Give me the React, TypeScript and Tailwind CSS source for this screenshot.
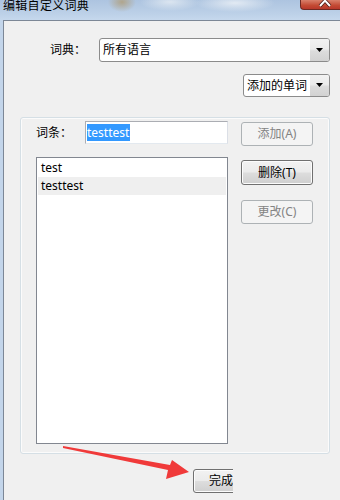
import React from "react";

const font = "font-['Noto_Sans','Noto_Sans_CJK_SC',sans-serif]";

function Arrow() {
  return (
    <svg width="8" height="5" viewBox="0 0 8 5">
      <path d="M0 0 L7 0 L3.5 4 Z" fill="#000" />
    </svg>
  );
}

function Combo({ text, width }: { text: string; width: string }) {
  return (
    <div className={`${width} flex rounded-[3px] border border-[#8b8b8b] bg-white overflow-hidden`}>
      <div className="flex-1 flex items-center pl-[3px] text-[12px] leading-[14px] text-black whitespace-nowrap overflow-hidden">{text}</div>
      <div className="w-[19px] flex items-center justify-center bg-[linear-gradient(#f2f2f2,#ebebeb_45%,#dcdcdc_55%,#d2d2d2)]">
        <Arrow />
      </div>
    </div>
  );
}

function Btn({ label, enabled, extra = "" }: { label: string; enabled?: boolean; extra?: string }) {
  return enabled ? (
    <div className={`h-[25px] w-[72px] flex items-center justify-center rounded-[3px] border border-[#707070] bg-[linear-gradient(#f2f2f2,#ebebeb_48%,#dddddd_52%,#cfcfcf)] text-[12px] text-black shadow-[inset_0_0_0_1px_#fcfcfc] ${extra}`}>
      {label}
    </div>
  ) : (
    <div className={`h-[24px] w-[72px] flex items-center justify-center rounded-[3px] border border-[#adb2b5] bg-[#f4f4f4] text-[12px] text-[#838383] ${extra}`}>
      {label}
    </div>
  );
}

export default function App() {
  return (
    <div className={`relative w-[340px] h-[500px] overflow-hidden bg-[#c3d5ea] ${font}`}>
      {/* title bar */}
      <div className="h-[20px] flex items-start justify-between bg-[radial-gradient(ellipse_14px_10px_at_122px_2px,#b0a58c,transparent),radial-gradient(ellipse_30px_9px_at_170px_2px,#dbe5f0,transparent),radial-gradient(ellipse_40px_9px_at_235px_3px,#e2eaf3,transparent),linear-gradient(#adc4e0,#bdd1e8_70%,#c6d8ed)]">
        <span className="pl-[3px] -mt-[1px] text-[12px] leading-[13px] tracking-[0.3px] text-black">编辑自定义词典</span>
        <div className="w-[40px] h-[10px] rounded-bl-[4px] border border-t-0 border-r-0 border-[#6f2a22] bg-[linear-gradient(#d9806b,#c34a33_60%,#b8382a)] flex justify-center overflow-hidden">
          <svg width="16" height="10" viewBox="0 0 16 10" className="ml-[10px]">
            <path d="M2 -5 L12 6 M12 -5 L2 6" stroke="#4a1a14" strokeWidth="3.5" />
            <path d="M2 -5 L12 6 M12 -5 L2 6" stroke="#fff" strokeWidth="2" />
          </svg>
        </div>
      </div>

      {/* window body */}
      <div className="ml-[3px] h-[480px] border-l border-t border-[#7c8796] bg-[#f0f0f0] flex flex-col">
        <div className="mt-[17px] flex items-center pl-[46px]">
          <div className="w-[49px] text-[12px] text-black">词典：</div>
          <div className="h-[24px] flex">
            <Combo text="所有语言" width="w-[231px]" />
          </div>
        </div>

        <div className="mt-[12px] flex justify-end pr-[10px]">
          <div className="h-[23px] flex">
            <Combo text="添加的单词" width="w-[87px]" />
          </div>
        </div>

        {/* group box */}
        <div className="mt-[20px] ml-[16px] w-[310px] h-[337px] rounded-[3px] border border-[#d5dfe5] shadow-[inset_0_0_0_1px_#fbfbfb] flex pl-[15px] pt-[3px]">
          <div className="w-[192px] flex flex-col">
            <div className="h-[23px] flex items-center">
              <div className="w-[49px] text-[12px] text-black">词条：</div>
              <div className="w-[143px] h-[23px] border border-[#abadb3] border-r-[#dbdfe6] border-b-[#e3e9ef] bg-white flex items-center pl-[1px]">
                <span className="bg-[#3399ff] text-white text-[12px] leading-[17px] pr-[1px]">testtest</span>
              </div>
            </div>
            <div className="mt-[13px] h-[287px] border border-[#828790] bg-white p-[1px] text-[12px] text-black">
              <div className="h-[18px] flex items-center pl-[3px]">test</div>
              <div className="h-[18px] flex items-center pl-[3px] bg-[#efefef]">testtest</div>
            </div>
          </div>
          <div className="ml-[13px] pt-[1px] flex flex-col">
            <Btn label="添加(A)" />
            <Btn label="删除(T)" enabled extra="mt-[14px]" />
            <Btn label="更改(C)" extra="mt-[15px]" />
          </div>
        </div>

        {/* bottom button, cut off */}
        <div className="mt-[15px] ml-[189px] w-[40px] h-[24px] overflow-hidden">
          <div className="w-[56px] h-[24px] flex items-center justify-center rounded-[3px] border border-[#707070] bg-[linear-gradient(#f2f2f2,#ebebeb_48%,#dddddd_52%,#cfcfcf)] shadow-[inset_0_0_0_1px_#fcfcfc] text-[12px] text-black">
            完成
          </div>
        </div>
      </div>

      {/* red annotation arrow */}
      <svg className="absolute left-0 top-0 pointer-events-none" width="340" height="500" viewBox="0 0 340 500">
        <polygon points="63,446 170,465 172,460 189,472 166,479 168,470 63,448" fill="#f03a3a" />
      </svg>
    </div>
  );
}
